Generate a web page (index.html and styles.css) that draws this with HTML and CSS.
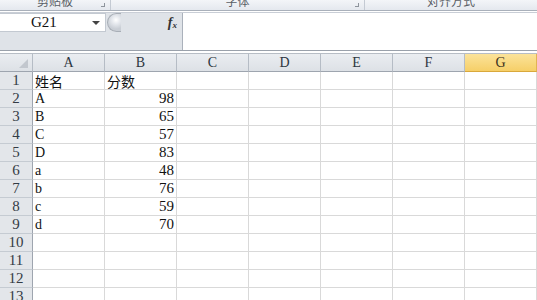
FILE: index.html
```html
<!DOCTYPE html>
<html lang="zh">

<head>
  <meta charset="UTF-8">
  <title>G21 - 成绩表</title>
  <link rel="stylesheet" href="styles.css">
</head>

<body>
  <div class="ribbon">
    <div class="group group-clip"><span>剪贴板</span><i class="launch"></i></div>
    <div class="group group-font"><span>字体</span><i class="launch"></i></div>
    <div class="group group-align"><span>对齐方式</span></div>
  </div>

  <div class="fbar">
    <div class="fbar-left">
      <div class="name-row">
        <div class="name-box">
          <span class="name-text">G21</span>
          <span class="name-arrow"></span>
        </div>
        <span class="round-btn"></span>
        <span class="fx">f<sub>x</sub></span>
      </div>
    </div>
    <div class="fbar-input"></div>
  </div>

  <div class="sheet">
    <div class="hd corner"><span class="tri"></span></div>
    <div class="hd">A</div>
    <div class="hd">B</div>
    <div class="hd">C</div>
    <div class="hd">D</div>
    <div class="hd">E</div>
    <div class="hd">F</div>
    <div class="hd active">G</div>

    <div class="rh">1</div><div class="c">姓名</div><div class="c">分数</div><div class="c"></div><div class="c"></div><div class="c"></div><div class="c"></div><div class="c"></div>
    <div class="rh">2</div><div class="c">A</div><div class="c num">98</div><div class="c"></div><div class="c"></div><div class="c"></div><div class="c"></div><div class="c"></div>
    <div class="rh">3</div><div class="c">B</div><div class="c num">65</div><div class="c"></div><div class="c"></div><div class="c"></div><div class="c"></div><div class="c"></div>
    <div class="rh">4</div><div class="c">C</div><div class="c num">57</div><div class="c"></div><div class="c"></div><div class="c"></div><div class="c"></div><div class="c"></div>
    <div class="rh">5</div><div class="c">D</div><div class="c num">83</div><div class="c"></div><div class="c"></div><div class="c"></div><div class="c"></div><div class="c"></div>
    <div class="rh">6</div><div class="c">a</div><div class="c num">48</div><div class="c"></div><div class="c"></div><div class="c"></div><div class="c"></div><div class="c"></div>
    <div class="rh">7</div><div class="c">b</div><div class="c num">76</div><div class="c"></div><div class="c"></div><div class="c"></div><div class="c"></div><div class="c"></div>
    <div class="rh">8</div><div class="c">c</div><div class="c num">59</div><div class="c"></div><div class="c"></div><div class="c"></div><div class="c"></div><div class="c"></div>
    <div class="rh">9</div><div class="c">d</div><div class="c num">70</div><div class="c"></div><div class="c"></div><div class="c"></div><div class="c"></div><div class="c"></div>
    <div class="rh">10</div><div class="c"></div><div class="c"></div><div class="c"></div><div class="c"></div><div class="c"></div><div class="c"></div><div class="c"></div>
    <div class="rh">11</div><div class="c"></div><div class="c"></div><div class="c"></div><div class="c"></div><div class="c"></div><div class="c"></div><div class="c"></div>
    <div class="rh">12</div><div class="c"></div><div class="c"></div><div class="c"></div><div class="c"></div><div class="c"></div><div class="c"></div><div class="c"></div>
    <div class="rh">13</div><div class="c"></div><div class="c"></div><div class="c"></div><div class="c"></div><div class="c"></div><div class="c"></div><div class="c"></div>
  </div>
</body>

</html>
```

FILE: styles.css
```css
* {
  margin: 0;
  padding: 0;
  box-sizing: border-box;
}

body {
  width: 537px;
  height: 300px;
  overflow: hidden;
  background: #ffffff;
  font-family: 'Liberation Serif', 'Noto Sans CJK SC', serif;
  font-size: 14px;
  color: #222;
}

/* ribbon strip, labels cut off at top */

.ribbon {
  display: flex;
  height: 11px;
  background: linear-gradient(#f3f5f8, #e4e8ee);
  border-bottom: 1px solid #a9b0ba;
  overflow: hidden;
}

.group {
  position: relative;
  display: flex;
  align-items: flex-end;
  justify-content: center;
  border-right: 1px solid #c4cad3;
  color: #5a5f66;
  font-family: 'Noto Sans CJK SC', sans-serif;
  font-size: 12px;
  line-height: 12px;
}

.group span {
  margin-bottom: 3px;
}

.group-clip {
  width: 111px;
}

.group-font {
  width: 254px;
}

.group-align {
  flex: 1;
  border-right: none;
}

.launch {
  position: absolute;
  right: 5px;
  bottom: 3px;
  width: 4px;
  height: 4px;
  border-right: 1px solid #8e949c;
  border-bottom: 1px solid #8e949c;
}

/* formula bar */

.fbar {
  display: flex;
  height: 39px;
  margin-top: 1px;
  border-top: 1px solid #c9ced6;
  border-bottom: 1px solid #9aa1ab;
}

.fbar-left {
  width: 183px;
  background: #dfe3e8;
  border-right: 1px solid #aab1bb;
}

.name-row {
  display: flex;
  align-items: center;
  height: 19px;
}

.name-box {
  display: flex;
  align-items: center;
  width: 106px;
  height: 19px;
  background: #ffffff;
  border: 1px solid #c3c9d1;
  border-left: none;
}

.name-text {
  margin-left: 31px;
  font-size: 15px;
  color: #111;
}

.name-arrow {
  margin-left: auto;
  margin-right: 5px;
  width: 0;
  height: 0;
  border-left: 4px solid transparent;
  border-right: 4px solid transparent;
  border-top: 4px solid #444;
}

.round-btn {
  width: 14px;
  height: 19px;
  margin-left: 1px;
  border-radius: 10px 0 0 10px;
  border: 1px solid #a8aeb6;
  border-right: none;
  background: radial-gradient(circle at 8px 6px, #ffffff 0, #e6e9ee 4px, #c9ced5 9px);
}

.fx {
  margin-left: auto;
  margin-right: 5px;
  font-family: 'Liberation Serif', 'DejaVu Serif', serif;
  font-style: italic;
  font-weight: bold;
  font-size: 14px;
  color: #333;
}

.fx sub {
  font-size: 9px;
  vertical-align: -1px;
}

.fbar-input {
  flex: 1;
  background: #ffffff;
}

/* sheet grid */

.sheet {
  display: grid;
  grid-template-columns: 33px repeat(7, 72px);
  grid-template-rows: 18px;
  grid-auto-rows: 18px;
  margin-top: 2px;
  border-top: 1px solid #b7bdc5;
}

.hd {
  display: flex;
  align-items: center;
  justify-content: center;
  background: linear-gradient(#eaedf1, #dde1e6);
  border-right: 1px solid #b5bcc5;
  border-bottom: 1px solid #9ea5af;
  color: #2d3640;
}

.corner {
  position: relative;
}

.tri {
  position: absolute;
  right: 4px;
  bottom: 3px;
  width: 0;
  height: 0;
  border-left: 9px solid transparent;
  border-bottom: 9px solid #c2c7ce;
}

.hd.active {
  background: linear-gradient(#fbe39a, #f6cf68);
  border-right-color: #e2b453;
  border-bottom-color: #d9a83c;
  color: #3a3220;
}

.rh {
  display: flex;
  align-items: center;
  justify-content: center;
  background: #e3e6ea;
  border-right: 1px solid #9ea5af;
  border-bottom: 1px solid #c5cbd2;
  color: #333b45;
  font-size: 15px;
}

.c {
  display: flex;
  align-items: center;
  padding: 0 2px;
  border-right: 1px solid #d9d9d9;
  border-bottom: 1px solid #d9d9d9;
  color: #111;
  white-space: nowrap;
}

.c.num {
  justify-content: flex-end;
  font-size: 15px;
}
```
